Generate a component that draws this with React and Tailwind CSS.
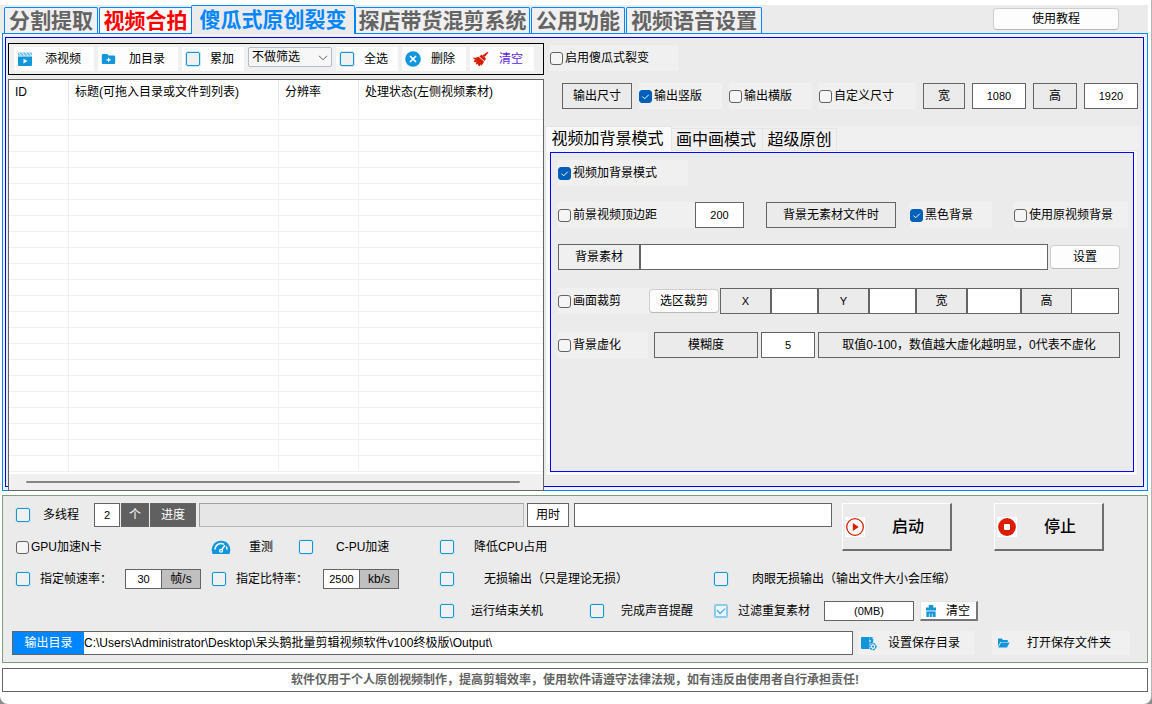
import React from "react";

/* ---------- icons ---------- */

function ClipIcon() {
  return (
    <svg width="16" height="15" viewBox="0 0 16 15" aria-hidden="true">
      <path d="M2 .6h12a1 1 0 0 1 1 1v2.200H1V1.600a1 1 0 0 1 1-1z" fill="#6dbfe9" />
      <path d="m2 .8 2.200 3M5.400.8l2.200 3M8.800.8l2.200 3M12.200.8l2.200 3" stroke="#fff" strokeWidth=".9" />
      <path d="M1 4.400h14V12.800a1.200 1.200 0 0 1-1.200 1.200H2.200A1.200 1.200 0 0 1 1 12.800z" fill="#1296db" />
      <path d="M6.500 6.800v4.600l4-2.300z" fill="#fff" />
    </svg>
  );
}

function FolderAddIcon() {
  return (
    <svg width="16" height="14" viewBox="0 0 16 14" aria-hidden="true">
      <path d="M2 2h4.200l1.400 1.600H13a1.200 1.200 0 0 1 1.200 1.200v6A1.200 1.200 0 0 1 13 12H2a1.200 1.200 0 0 1-1.200-1.200V3.200A1.200 1.200 0 0 1 2 2z" fill="#1296db" />
      <path d="M7.600 5.800v4M5.600 7.800h4" stroke="#fff" strokeWidth="1.200" />
    </svg>
  );
}

function DeleteIcon() {
  return (
    <svg width="16" height="16" viewBox="0 0 16 16" aria-hidden="true">
      <circle cx="8" cy="8" r="7.800" fill="#1296db" />
      <path d="m5 5 6 6M11 5l-6 6" stroke="#fff" strokeWidth="1.700" />
    </svg>
  );
}

function BroomIcon() {
  return (
    <svg width="16" height="16" viewBox="0 0 16 16" aria-hidden="true">
      <path d="M14.800.8 15.400 1.600 11.800 6 9.600 4.200z" fill="#d81e06" />
      <path d="m8.600 3.600 4.400 3.800-1.400 2.600-5.200-4.600z" fill="#d81e06" />
      <path d="m5.600 5.800 5.400 4.800c-.4 1.600-1.600 3.200-2.800 4.200l-1-1.600-.4 2-1.600-.6-.4-2-1.200 1.200-.8-1.400.8-1.600-2 .6L.8 9.800l1.800-1L.6 8V6.600c1.600.2 3.400 0 5-.8z" fill="#d81e06" />
    </svg>
  );
}

function GaugeIcon() {
  return (
    <svg width="20" height="16" viewBox="0 0 20 16" aria-hidden="true">
      <path d="M1.600 15A9.300 9.300 0 1 1 18.400 15z" fill="#1296db" />
      <path d="M4 10.500a6 6 0 0 1 8.800-5.200M15.200 7.500a6 6 0 0 1 .8 3" stroke="#fff" strokeWidth="1.500" fill="none" />
      <path d="m13.800 6.200-3.200 5" stroke="#fff" strokeWidth="1.500" />
      <circle cx="10" cy="11.800" r="2" fill="#fff" />
      <circle cx="10" cy="11.800" r=".8" fill="#1296db" />
    </svg>
  );
}

function PlayIcon() {
  return (
    <svg width="20" height="20" viewBox="0 0 20 20" aria-hidden="true" className="bg-white">
      <circle cx="10" cy="10" r="8.300" fill="none" stroke="#d81e06" strokeWidth="1.300" />
      <path d="M7.800 6v8l6-4z" fill="#d81e06" />
    </svg>
  );
}

function StopIcon() {
  return (
    <svg width="20" height="20" viewBox="0 0 20 20" aria-hidden="true" className="bg-white">
      <circle cx="10" cy="10" r="8.900" fill="#d81e06" />
      <rect x="7" y="7" width="6" height="6" rx="1" fill="#fff" />
    </svg>
  );
}

function BrushIcon() {
  return (
    <svg width="12" height="14" viewBox="0 0 12 14" aria-hidden="true">
      <path d="M3.800 1h4.400v2.600H11v2.800H1V3.600h2.800z" fill="#1296db" />
      <path d="M1.400 7.400h9.200V13H1.400z" fill="#1296db" />
      <path d="M4.400 9.600V13M7.400 9.600V13" stroke="#a9d8f1" strokeWidth="1.200" />
    </svg>
  );
}

function DiskGearIcon() {
  return (
    <svg width="18" height="15" viewBox="0 0 18 15" aria-hidden="true">
      <path d="M2 1h7.600v12H2a1 1 0 0 1-1-1V2a1 1 0 0 1 1-1z" fill="#1296db" />
      <path d="M9.600 1h3.600v12H9.600z" fill="#1296db" />
      <path d="m9.400 3.400 2 1.500-2 1.500zM11.800 1.600h1.400v1.200h-1.400z" fill="#d5ecf8" />
      <circle cx="13" cy="10.600" r="3.900" fill="#f0f0f0" />
      <circle cx="13" cy="10.600" r="3" fill="none" stroke="#1296db" strokeWidth="1.400" strokeDasharray="2.200 .6" />
      <circle cx="13" cy="10.600" r="1.100" fill="#1296db" />
    </svg>
  );
}

function OpenFolderIcon() {
  return (
    <svg width="13" height="12" viewBox="0 0 13 12" aria-hidden="true">
      <path d="M1 1.500h3.800l1.200 1.400h4.800v2H3.400L1 9.600z" fill="#1296db" />
      <path d="M4 5.600h8.600L10 10.600H1.400z" fill="#1296db" />
    </svg>
  );
}

/* ---------- controls ---------- */

function NativeCheck({ label, checked, className = "" }) {
  return (
    <label className={`flex shrink-0 items-center gap-[2px] whitespace-nowrap ${className}`}>
      <span className="relative flex">
        <input
          type="checkbox"
          defaultChecked={checked}
          className="peer size-[13px] appearance-none rounded-[3px] border border-[#626262] bg-[#f5f5f5] checked:border-[#005fb8] checked:bg-[#005fb8]"
        />
        <svg viewBox="0 0 13 13" className="pointer-events-none absolute inset-0 hidden peer-checked:block" aria-hidden="true">
          <path d="m3.500 6.600 2.200 2.200L9.800 4.700" fill="none" stroke="#fff" strokeWidth="1" />
        </svg>
      </span>
      {label}
    </label>
  );
}

function BlueCheck({ label, checked, gap = "gap-3", className = "" }) {
  return (
    <label className={`flex shrink-0 items-center whitespace-nowrap ${gap} ${className}`}>
      <span className="relative flex">
        <input
          type="checkbox"
          defaultChecked={checked}
          className="peer size-[14px] appearance-none rounded-[2px] border border-[#1296db] bg-[#f0f0f0] shadow-[0_0_0_1px_#d3e6f0] checked:border-2 checked:border-[#8ccbee] checked:bg-[#eef7fc] checked:shadow-none"
        />
        <svg viewBox="0 0 14 14" className="pointer-events-none absolute inset-0 hidden peer-checked:block" aria-hidden="true">
          <path d="m3 6 3 3.500L11.200 4.600" fill="none" stroke="#4bb0e4" strokeWidth="1.300" />
        </svg>
      </span>
      {label}
    </label>
  );
}

function Box({ children, className = "" }) {
  return (
    <div className={`flex shrink-0 items-center justify-center whitespace-nowrap border border-[#646464] ${className}`}>
      {children}
    </div>
  );
}

function Field({ label, value = "", className = "" }) {
  return (
    <input
      type="text"
      aria-label={label}
      defaultValue={value}
      className={`min-w-0 border border-[#646464] bg-white text-center text-[11px] outline-none ${className}`}
    />
  );
}

function RoundButton({ children, className = "" }) {
  return (
    <button type="button" className={`shrink-0 whitespace-nowrap rounded-[4px] border border-[#cfcfcf] border-b-[#b9b9b9] bg-[#fdfdfd] ${className}`}>
      {children}
    </button>
  );
}

function ToolButton({ icon, children, className = "" }) {
  return (
    <button type="button" className={`flex h-6 shrink-0 items-center whitespace-nowrap bg-[#fdfdfd] pl-[3px] ${className}`}>
      {icon}
      {children}
    </button>
  );
}

/* ---------- header tabs ---------- */

const tabStyle = "h-[26px] shrink-0 whitespace-nowrap border border-b-0 border-[#0087ff] bg-[#f0f0f0] rounded-t-[2px] pt-px text-[#646464]";

function HeaderTabs() {
  return (
    <header className="flex h-7 items-end justify-between bg-[#ebebeb] pl-1">
      <nav className="flex items-end gap-px text-[21px] leading-[24px] font-bold">
        <button type="button" className={`${tabStyle} w-[94px]`}>分割提取</button>
        <button type="button" className="h-[26px] w-[92px] shrink-0 whitespace-nowrap rounded-tl-[2px] border-t border-l border-[#0087ff] bg-[#fafafa] pt-px text-[#ff0000]">视频合拍</button>
        <button type="button" className="relative z-10 -mx-px -mb-px h-[29px] w-[164px] shrink-0 whitespace-nowrap rounded-t-[2px] border border-b-0 border-[#0087ff] bg-[#ebebeb] text-[#0087ff]">傻瓜式原创裂变</button>
        <button type="button" className={`${tabStyle} w-[175px]`}>探店带货混剪系统</button>
        <button type="button" className={`${tabStyle} w-[94px]`}>公用功能</button>
        <button type="button" className={`${tabStyle} w-[136px]`}>视频语音设置</button>
      </nav>
      <RoundButton className="mr-[29px] mb-[3px] h-[22px] w-[126px]">使用教程</RoundButton>
    </header>
  );
}

/* ---------- material list ---------- */

function Toolbar() {
  return (
    <div className="flex items-start gap-1 border border-black bg-[#f0f0f0] py-[3px] pl-[5px]">
      <ToolButton icon={<ClipIcon />} className="w-20 gap-3">添视频</ToolButton>
      <ToolButton icon={<FolderAddIcon />} className="w-20 gap-3">加目录</ToolButton>
      <BlueCheck label="累加" gap="gap-[10px]" className="h-6 w-[62px] bg-[#fdfdfd] pl-1" />
      <div className="relative flex w-[84px] shrink-0">
        <select aria-label="筛选" className="h-5 w-full appearance-none rounded-[2px] border border-[#b4bcc6] bg-[#f7f7f7] pl-[3px] leading-[18px] outline-none">
          <option>不做筛选</option>
        </select>
        <svg viewBox="0 0 10 6" className="pointer-events-none absolute top-[8px] right-[4px] h-[6px] w-[10px]" aria-hidden="true">
          <path d="m1 .8 4 4 4-4" fill="none" stroke="#606060" />
        </svg>
      </div>
      <BlueCheck label="全选" gap="gap-[10px]" className="h-6 w-[62px] bg-[#fdfdfd] pl-1" />
      <ToolButton icon={<DeleteIcon />} className="w-16 gap-[10px]">删除</ToolButton>
      <ToolButton icon={<BroomIcon />} className="w-16 gap-[10px] text-[#5b1fe0]">清空</ToolButton>
    </div>
  );
}

const emptyRows = Array.from({ length: 23 }, (_, i) => i);

function MaterialList() {
  return (
    <div className="border border-[#646464] bg-white">
      <table className="w-full table-fixed border-separate border-spacing-0">
        <colgroup>
          <col className="w-[60px]" />
          <col className="w-[210px]" />
          <col className="w-20" />
          <col />
        </colgroup>
        <thead>
          <tr className="h-6 text-left">
            <th className="border-r border-[#e5e5e5] p-0 pl-[6px] font-normal">ID</th>
            <th className="border-r border-[#e5e5e5] p-0 pl-[6px] font-normal">标题(可拖入目录或文件到列表)</th>
            <th className="border-r border-[#e5e5e5] p-0 pl-[6px] font-normal">分辨率</th>
            <th className="p-0 pl-[6px] font-normal">处理状态(左侧视频素材)</th>
          </tr>
        </thead>
        <tbody>
          {emptyRows.map((i) => (
            <tr key={i} className="h-4">
              <td className="border-r border-b border-[#f0f0f0] p-0" />
              <td className="border-r border-b border-[#f0f0f0] p-0" />
              <td className="border-r border-b border-[#f0f0f0] p-0" />
              <td className="border-b border-[#f0f0f0] p-0" />
            </tr>
          ))}
        </tbody>
      </table>
      <div className="mt-[2px] flex h-4 items-center bg-[#f0f0f0] pr-[23px] pl-[17px]">
        <div className="h-[2px] w-full rounded-full bg-[#858585]" />
      </div>
    </div>
  );
}

/* ---------- right side settings ---------- */

function BackgroundPanel() {
  return (
    <div className="flex min-h-[320px] flex-col border border-[#0000ff] bg-[#ebebeb] pt-[7px] pr-[13px] pl-[7px]">
      <NativeCheck label="视频加背景模式" checked className="h-[26px] w-[130px] bg-[#f0f0f0]" />

      <div className="-mr-2 mt-4 flex h-[26px]">
        <NativeCheck label="前景视频顶边距" className="w-[137px] bg-[#f0f0f0]" />
        <Field label="前景视频顶边距数值" value="200" className="w-[49px]" />
        <Box className="ml-[22px] w-[130px]">背景无素材文件时</Box>
        <NativeCheck label="黑色背景" checked className="ml-[14px] w-[82px] bg-[#f0f0f0]" />
        <NativeCheck label="使用原视频背景" className="ml-[22px] w-[114px] bg-[#f0f0f0]" />
      </div>

      <div className="mt-4 flex h-[26px]">
        <Box className="w-[82px] bg-[#f0f0f0]">背景素材</Box>
        <Field label="背景素材" className="flex-1" />
        <RoundButton className="ml-[2px] mt-px h-6 w-[70px]">设置</RoundButton>
      </div>

      <div className="mt-[18px] flex h-[26px]">
        <NativeCheck label="画面裁剪" className="w-[91px] bg-[#f0f0f0]" />
        <RoundButton className="mt-px h-6 w-[70px]">选区裁剪</RoundButton>
        <Box className="ml-px w-[51px] text-[11px]">X</Box>
        <Field label="X" className="w-[47px]" />
        <Box className="w-[51px] text-[11px]">Y</Box>
        <Field label="Y" className="w-[47px]" />
        <Box className="w-[51px]">宽</Box>
        <Field label="裁剪宽" className="w-[54px]" />
        <Box className="w-[50px] border-r-0">高</Box>
        <Field label="裁剪高" className="w-12" />
      </div>

      <div className="mt-[18px] flex h-[26px]">
        <NativeCheck label="背景虚化" className="w-[90px] bg-[#f0f0f0]" />
        <Box className="ml-[6px] w-[104px]">模糊度</Box>
        <Field label="模糊度" value="5" className="ml-[3px] w-[54px]" />
        <Box className="ml-[3px] flex-1">取值0-100，数值越大虚化越明显，0代表不虚化</Box>
      </div>
    </div>
  );
}

function SettingsColumn() {
  return (
    <div className="flex min-w-0 flex-1 flex-col pt-[7px] pl-px">
      <NativeCheck label="启用傻瓜式裂变" className="ml-[5px] h-[26px] w-32 bg-[#f0f0f0]" />

      <div className="mt-3 ml-[17px] flex h-[26px] gap-[7px]">
        <Box className="w-[70px]">输出尺寸</Box>
        <NativeCheck label="输出竖版" checked className="w-[83px] bg-[#f0f0f0]" />
        <NativeCheck label="输出横版" className="w-[83px] bg-[#f0f0f0]" />
        <NativeCheck label="自定义尺寸" className="w-[97px] bg-[#f0f0f0]" />
        <Box className="w-[42px]">宽</Box>
        <Field label="宽" value="1080" className="w-[54px]" />
        <Box className="w-[44px]">高</Box>
        <Field label="高" value="1920" className="w-[54px]" />
      </div>

      <div className="mt-[17px] mr-[3px] bg-[#f0f0f0] pr-[2px] pb-px">
        <nav className="flex items-end text-[16px] leading-[22px]">
          <button type="button" className="relative -mb-px h-[25px] w-[127px] shrink-0 border border-b-0 border-[#e5e5e5] bg-[#f9f9f9] pr-[2px] whitespace-nowrap">视频加背景模式</button>
          <button type="button" className="h-[22px] w-[91px] shrink-0 border-t border-r border-[#e5e5e5] bg-[#f0f0f0] pr-[2px] whitespace-nowrap">画中画模式</button>
          <button type="button" className="h-[22px] w-[74px] shrink-0 border-t border-r border-[#e5e5e5] bg-[#f0f0f0] whitespace-nowrap">超级原创</button>
        </nav>
        <div className="border border-[#e5e5e5] bg-[#f9f9f9] pt-px pr-[3px] pb-[3px] pl-1">
          <BackgroundPanel />
        </div>
      </div>
    </div>
  );
}

/* ---------- run options ---------- */

function BigButton({ icon, children, className = "" }) {
  return (
    <button
      type="button"
      className={`flex h-12 w-[110px] shrink-0 items-center gap-[27px] border-t border-l border-r-2 border-b-2 border-t-white border-l-white border-r-[#6e6e6e] border-b-[#6e6e6e] bg-[#ebebeb] pl-[2px] text-[16px] font-medium whitespace-nowrap ${className}`}
    >
      {icon}
      {children}
    </button>
  );
}

function RunPanel() {
  return (
    <section className="mt-1 flex flex-col gap-2 border border-[#7f9f7f] bg-[#ebebeb] py-[7px] pr-4 pl-[9px]">
      <div className="flex">
        <div className="flex min-w-0 flex-1 flex-col gap-2">
          <div className="flex h-6">
            <BlueCheck label="多线程" gap="gap-[13px]" className="w-[82px] pl-[4px]" />
            <Field label="线程数" value="2" className="w-[26px]" />
            <Box className="ml-px w-[28px] bg-[#606060] text-white">个</Box>
            <Box className="ml-px w-[46px] border-[#8a8a8a] bg-[#606060] text-white">进度</Box>
            <div role="progressbar" aria-label="进度" aria-valuenow={0} className="ml-[3px] flex-1 border border-t-[#a0a0a0] border-r-[#b9b9b9] border-b-[#b9b9b9] border-l-[#a0a0a0] bg-[#e6e6e6]" />
            <Box className="ml-[3px] w-[42px] bg-white">用时</Box>
            <Field label="用时" className="ml-[5px] w-[258px]" />
          </div>
          <div className="flex h-6">
            <NativeCheck label="GPU加速N卡" className="w-[199px] pl-[4px]" />
            <button type="button" className="flex w-[88px] shrink-0 items-center gap-[18px] whitespace-nowrap">
              <GaugeIcon />
              重测
            </button>
            <BlueCheck label="C-PU加速" gap="gap-[23px]" className="w-[141px]" />
            <BlueCheck label="降低CPU占用" gap="gap-5" />
          </div>
        </div>
        <BigButton icon={<PlayIcon />} className="ml-[10px]">启动</BigButton>
        <BigButton icon={<StopIcon />} className="mr-[27px] ml-[42px]">停止</BigButton>
      </div>

      <div className="flex h-6 items-center">
        <BlueCheck label="指定帧速率：" gap="gap-[10px]" className="w-[113px] pl-[4px]" />
        <Field label="帧速率" value="30" className="h-5 w-9 border-r-0" />
        <Box className="h-5 w-10 bg-[#c0c0c0]">帧/s</Box>
        <BlueCheck label="指定比特率：" gap="gap-[10px]" className="ml-[11px] w-[111px]" />
        <Field label="比特率" value="2500" className="h-5 w-9 border-r-0" />
        <Box className="h-5 w-10 bg-[#c0c0c0]">kb/s</Box>
        <BlueCheck label="无损输出（只是理论无损）" gap="gap-[30px]" className="ml-[41px] w-[274px]" />
        <BlueCheck label="肉眼无损输出（输出文件大小会压缩）" gap="gap-6" />
      </div>

      <div className="flex h-6 items-center pl-[428px]">
        <BlueCheck label="运行结束关机" gap="gap-[17px]" className="w-[150px]" />
        <BlueCheck label="完成声音提醒" gap="gap-[17px]" className="w-[124px]" />
        <BlueCheck label="过滤重复素材" checked gap="gap-[10px]" className="w-[110px]" />
        <Box className="h-5 w-[90px] bg-white text-[11px]">(0MB)</Box>
        <button type="button" className="ml-[6px] flex h-5 w-[58px] shrink-0 items-center gap-[9px] border-t border-l border-r-2 border-b-2 border-t-[#e5e5e5] border-l-[#e5e5e5] border-r-[#777777] border-b-[#777777] bg-[#fdfdfd] pl-1 whitespace-nowrap">
          <BrushIcon />
          清空
        </button>
      </div>

      <div className="flex h-6">
        <Box className="w-[72px] border-r-0 bg-[#0087ff] text-white">输出目录</Box>
        <input
          type="text"
          aria-label="输出目录"
          defaultValue="C:\Users\Administrator\Desktop\呆头鹅批量剪辑视频软件v100终极版\Output\"
          className="min-w-0 flex-1 border border-l-0 border-[#646464] bg-white outline-none"
        />
        <button type="button" className="ml-[5px] flex w-[116px] shrink-0 items-center gap-[10px] bg-[#f0f0f0] pl-[2px] whitespace-nowrap">
          <DiskGearIcon />
          设置保存目录
        </button>
        <button type="button" className="mr-px ml-[18px] flex w-[138px] shrink-0 items-center gap-[17px] bg-[#f0f0f0] pl-[5px] whitespace-nowrap">
          <OpenFolderIcon />
          打开保存文件夹
        </button>
      </div>
    </section>
  );
}

export default function App() {
  return (
    <div className="min-h-screen bg-[#8c8c8c]">
      <div className="min-h-screen min-w-[1152px] rounded-b-[8px] border-r border-[#b4b4b4] bg-white pt-[5px] pr-[3px] font-['Liberation_Sans','Noto_Sans_CJK_SC',sans-serif] text-[12px] leading-[16px] text-black">
        <HeaderTabs />
        <main className="pl-[2px]">
          <div className="border border-[#0087ff] bg-[#f0f0f0] pt-[3px] pr-[3px] pb-[3px] pl-[2px]">
            <div className="flex border border-[#0000d8] bg-[#ebebeb] pl-[2px]">
              <div className="relative -mb-[5px] flex w-[536px] shrink-0 flex-col gap-1 pt-[5px]">
                <Toolbar />
                <MaterialList />
              </div>
              <SettingsColumn />
            </div>
          </div>
          <RunPanel />
          <footer className="mt-[5px] flex h-6 items-center justify-center border border-[#646464] font-bold text-[#646464]">
            软件仅用于个人原创视频制作，提高剪辑效率，使用软件请遵守法律法规，如有违反由使用者自行承担责任!
          </footer>
        </main>
      </div>
    </div>
  );
}
